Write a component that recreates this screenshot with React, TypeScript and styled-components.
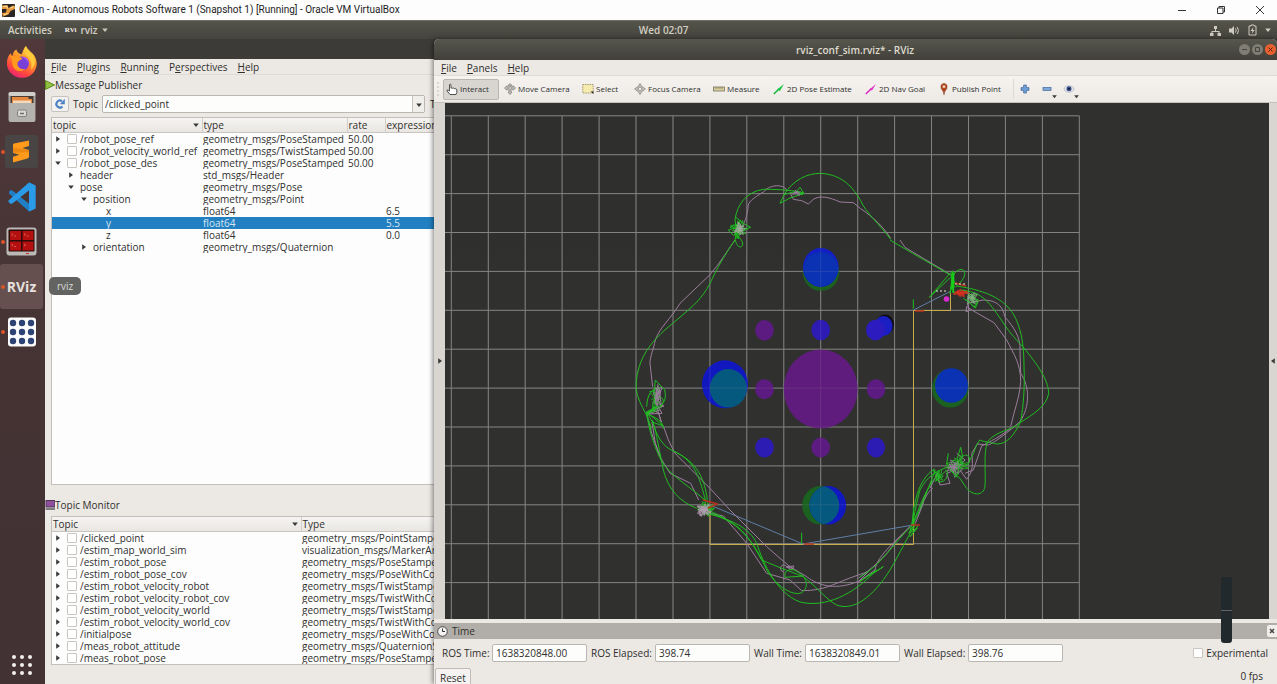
import React from 'react';
import styled, { createGlobalStyle } from 'styled-components';

const GlobalStyle = createGlobalStyle`
  * { box-sizing: border-box; }
  html, body { margin: 0; padding: 0; background: #3c3b37; }
  body, button, input { font-family: 'Open Sans', 'Noto Sans', sans-serif; font-size: 10px; line-height: 12px; color: #2f2f2d; }
  button { margin: 0; padding: 0; border: 0; background: none; }
  u { text-underline-offset: 1px; }
  svg { flex: none; }
`;

/* ---------- shell ---------- */

const Screen = styled.div`
  display: flex;
  flex-direction: column;
  height: 100vh;
  min-height: 600px;
  overflow: hidden;
`;

const HostBar = styled.header`
  display: flex;
  align-items: center;
  flex: 0 0 20px;
  padding-left: 2px;
  background: #fdfdfd;
  gap: 4px;
`;

const HostTitle = styled.h1`
  flex: 1;
  margin: 0;
  font: 400 10px/14px Roboto, sans-serif;
  color: #1c1c1c;
  white-space: nowrap;
`;

const HostButton = styled.button`
  display: flex;
  justify-content: center;
  width: 35px;
`;

const TopBar = styled.div`
  display: grid;
  grid-template-columns: 639fr auto 590fr;
  align-items: center;
  flex: 0 0 19px;
  padding: 0 6px 0 8px;
  background: linear-gradient(#55544a, #45443d);
  border-top: 1px solid #6f6e66;
  color: #d3cfc3;
  font-weight: 600;
`;

const TopGroup = styled.div<{ $end?: boolean }>`
  display: flex;
  align-items: center;
  justify-content: ${p => (p.$end ? 'flex-end' : 'flex-start')};
  gap: ${p => (p.$end ? 8 : 13)}px;
`;

const TopButton = styled.button`
  display: flex;
  align-items: center;
  gap: 4px;
  color: inherit;
  font-weight: 600;
`;

const Desktop = styled.div`
  display: grid;
  grid-template-columns: 45px minmax(0, 389fr) minmax(0, 843fr);
  flex: 1;
  min-height: 0;
`;

/* ---------- dock ---------- */

const Dock = styled.nav`
  display: flex;
  flex-direction: column;
  background: linear-gradient(#51383a, #463435 40%, #423233);
`;

const DockSlot = styled.div<{ $bottom?: boolean }>`
  position: relative;
  flex: 0 0 45px;
  margin-top: ${p => (p.$bottom ? 'auto' : '0')};
  margin-bottom: ${p => (p.$bottom ? '-3px' : '0')};
`;

const DockButton = styled.button<{ $active?: boolean }>`
  display: flex;
  align-items: center;
  justify-content: center;
  width: 43px;
  height: 45px;
  border-radius: 3px;
  background: ${p => (p.$active ? '#65504f' : 'transparent')};
`;

const RunningDot = styled.span`
  position: absolute;
  left: 1px;
  top: 21px;
  width: 4px;
  height: 4px;
  border-radius: 50%;
  background: #dc5427;
`;

const Tooltip = styled.div`
  position: absolute;
  z-index: 5;
  left: 49px;
  top: 13px;
  padding: 3px 8px;
  border-radius: 5px;
  background: #636462;
  color: #dad9d5;
`;

/* ---------- rqt window ---------- */

const RqtWindow = styled.section`
  display: flex;
  flex-direction: column;
  min-width: 0;
  margin-top: 20px;
  padding-bottom: 19px;
  background: #ece8e4;
  overflow: hidden;
`;

const MenuBar = styled.nav<{ $pad: number; $gap: number }>`
  display: flex;
  align-items: center;
  flex: 0 0 16px;
  gap: ${p => p.$gap}px;
  padding-left: ${p => p.$pad}px;
  background: #ece8e4;
  border-bottom: 1px solid #dedad6;
  button { font-weight: 500; }
`;

const DockTitle = styled.h2`
  display: flex;
  align-items: center;
  flex: 0 0 20px;
  margin: 0;
  padding-bottom: 1px;
  font-weight: 400;
  font-size: 10px;
`;

const TopicRow = styled.div`
  display: flex;
  align-items: center;
  flex: 0 0 18px;
  padding-left: 6px;
  white-space: nowrap;
`;

const RefreshButton = styled.button`
  display: flex;
  align-items: center;
  justify-content: center;
  width: 18px;
  height: 16px;
  margin-right: 4px;
  border: 1px solid #c6c2bd;
  border-radius: 2px;
  background: #f4f2f0;
`;

const Combo = styled.div`
  display: flex;
  flex: 1;
  height: 18px;
  margin: 0 5px 0 4px;
  border: 1px solid #bab6b1;
  border-radius: 2px;
  background: #fdfdfc;
  input { flex: 1; min-width: 0; padding: 0 2px; border: 0; background: none; outline: 0; }
  button { width: 12px; border-left: 1px solid #c6c2bd; background: #f1efec; }
`;

const Clipped = styled.span`
  width: 4px;
  overflow: hidden;
`;

const TableFrame = styled.div<{ $grow?: boolean }>`
  flex: ${p => (p.$grow ? '1 1 0' : '0 0 149px')};
  min-height: 0;
  margin: ${p => (p.$grow ? '4px 0 10px 6px' : '1px 0 0 6px')};
  border: 1px solid #c3bfba;
  border-right: 0;
  background: #fdfdfd;
  overflow: hidden;
`;

const Table = styled.table`
  width: 100%;
  table-layout: fixed;
  border-collapse: collapse;
  th, td { padding: 0 0 0 1px; text-align: left; font-weight: 400; white-space: nowrap; overflow: hidden; }
  th { height: 14px; background: linear-gradient(#f6f4f2, #e9e6e2); border-right: 1px solid #d2ceca; border-bottom: 1px solid #c9c5c0; }
  th:last-child { border-right: 0; }
  td { height: 12px; line-height: 12px; }
`;

const HeadCell = styled.span`
  display: flex;
  align-items: center;
  justify-content: space-between;
  padding-right: 3px;
`;

const Row = styled.tr<{ $selected?: boolean }>`
  background: ${p => (p.$selected ? '#2280c2' : 'transparent')};
  color: ${p => (p.$selected ? '#d6e6f2' : 'inherit')};
`;

const TreeCell = styled.span<{ $level: number }>`
  display: flex;
  align-items: center;
  height: 12px;
  padding-left: ${p => p.$level * 13}px;
`;

const Twisty = styled.button`
  display: flex;
  align-items: center;
  justify-content: center;
  width: 9px;
  height: 12px;
  margin-right: 5px;
`;

const Tick = styled.input`
  appearance: none;
  flex: 0 0 10px;
  width: 10px;
  height: 10px;
  margin: 0 3px 0 0;
  border: 1px solid #c9c6c2;
  border-radius: 1px;
  background: #fff;
`;

/* ---------- rviz window ---------- */

const RvizWindow = styled.section`
  position: relative;
  z-index: 2;
  display: flex;
  flex-direction: column;
  min-width: 0;
  border-radius: 5px 5px 0 0;
  background: #ece8e4;
  box-shadow: -1px 0 5px rgba(0, 0, 0, 0.5);
  overflow: clip;
  overflow-clip-margin: 6px;
`;

const TitleBar = styled.header`
  display: grid;
  grid-template-columns: 1fr auto 1fr;
  align-items: center;
  flex: 0 0 21px;
  padding-right: 1px;
  border-radius: 5px 5px 0 0;
  background: linear-gradient(#58574d, #403f3a);
  color: #dfdbd0;
  h2 { grid-column: 2; margin: 0; font-size: 10px; font-weight: 600; }
`;

const WindowButtons = styled.div`
  display: flex;
  justify-content: flex-end;
  gap: 2px;
`;

const RoundButton = styled.button<{ $close?: boolean }>`
  display: flex;
  align-items: center;
  justify-content: center;
  width: 11px;
  height: 11px;
  border-radius: 50%;
  background: ${p => (p.$close ? '#e9602f' : '#7f7d74')};
`;

const ToolBar = styled.div`
  display: flex;
  align-items: center;
  flex: 0 0 27px;
  gap: 2px;
  padding-left: 3px;
  background: linear-gradient(#f5f2ef, #edeae6);
  border-bottom: 1px solid #c5c1bc;
`;

const Grip = styled.span`
  width: 4px;
  height: 14px;
  border-left: 2px dotted #d8d4cf;
`;

const Tool = styled.button<{ $w: number; $on?: boolean }>`
  position: relative;
  display: flex;
  align-items: center;
  flex: 0 0 ${p => p.$w}px;
  gap: 2px;
  height: 21px;
  padding-left: 2px;
  border: 1px solid ${p => (p.$on ? '#b9b6b1' : 'transparent')};
  border-radius: 2px;
  background: ${p => (p.$on ? '#d8d5d1' : 'transparent')};
  font-size: 8px;
  font-weight: 500;
  white-space: nowrap;
`;

const MenuMark = styled.span`
  position: absolute;
  right: 0;
  bottom: 0;
  line-height: 0;
`;

const Separator = styled.span`
  width: 1px;
  height: 20px;
  margin-left: 4px;
  background: #dcd8d4;
`;

const ViewRow = styled.div`
  display: flex;
  flex: 1;
  min-height: 0;
`;

const SideStrip = styled.button<{ $w: number }>`
  display: flex;
  align-items: center;
  justify-content: center;
  flex: 0 0 ${p => p.$w}px;
  background: #d9d6d2;
`;

const Scene = styled.svg`
  display: block;
  flex: 1;
  min-width: 0;
  height: 100%;
  background: #30302f;
`;

const TimeHeader = styled.header`
  display: flex;
  align-items: center;
  flex: 0 0 16px;
  gap: 4px;
  margin-top: 4px;
  padding-left: 3px;
  background: #b1aea9;
  h3 { flex: 1; margin: 0; font-size: 10px; font-weight: 500; }
`;

const PanelClose = styled.button`
  display: flex;
  align-items: center;
  justify-content: center;
  width: 10px;
  height: 12px;
  border-radius: 2px 0 0 2px;
  background: #f0eeeb;
`;

const TimeFields = styled.form`
  display: flex;
  align-items: center;
  flex: 0 0 28px;
  gap: 4px;
  padding: 0 9px 0 8px;
`;

const Field = styled.label<{ $w: number }>`
  display: flex;
  align-items: center;
  white-space: nowrap;
  span { width: ${p => p.$w}px; }
  input { width: 95px; height: 18px; padding: 0 3px; border: 1px solid #bab6b1; border-radius: 2px; background: #fdfdfc; }
`;

const Experimental = styled.label`
  display: flex;
  align-items: center;
  margin-left: auto;
  white-space: nowrap;
`;

const StatusRow = styled.footer`
  display: flex;
  align-items: center;
  justify-content: space-between;
  flex: 0 0 17px;
  padding: 0 14px 0 1px;
  overflow: hidden;
`;

const ResetButton = styled.button`
  align-self: flex-start;
  height: 20px;
  margin-top: 1px;
  padding: 0 4px;
  border: 1px solid #c0bcb7;
  border-radius: 2px;
  background: #f5f3f1;
`;

const LevelBar = styled.div`
  position: absolute;
  right: 45px;
  bottom: 41px;
  display: flex;
  align-items: center;
  width: 11px;
  height: 66px;
  border-radius: 3px;
  background: #22292c;
  &::after { content: ''; flex: 1; height: 1px; background: #5f6566; }
`;

/* ---------- small icons ---------- */

const Arrow = ({ dir, color = '#3a3a38', size = 6 }: { dir: 'r' | 'd' | 'l'; color?: string; size?: number }) => (
  <svg width={size} height={size} viewBox="0 0 6 6" aria-hidden="true">
    <path fill={color} d={dir === 'r' ? 'M1.2 0.2L5 3L1.2 5.8Z' : dir === 'l' ? 'M4.8 0.2L1 3L4.8 5.8Z' : 'M0.2 1.4H5.8L3 5Z'} />
  </svg>
);

const VBoxIcon = () => (
  <svg width="13" height="13" viewBox="0 0 13 13" aria-hidden="true">
    <rect width="13" height="13" rx="1" fill="#2a2522" />
    <path d="M0 1.5L5.5 1L6.5 4L11 1.5L13 2V5L8.5 7L6.5 10.5L1 12.5L0 9L4 8.4L4.6 5L0 5Z" fill="#e59a3c" />
    <path d="M1 2.6L4.8 2.2L5.6 4.5M8 4.2L11.5 2.8M2 10.8L5.5 9.5" stroke="#ffe2a8" fill="none" />
  </svg>
);

const FirefoxIcon = () => (
  <svg width="32" height="34" viewBox="0 0 32 34" aria-hidden="true">
    <defs>
      <linearGradient id="fox" x1="0.8" y1="0" x2="0.3" y2="1">
        <stop offset="0" stopColor="#ffe14a" />
        <stop offset="0.4" stopColor="#ff9a2a" />
        <stop offset="0.75" stopColor="#ff4a3c" />
        <stop offset="1" stopColor="#e8207a" />
      </linearGradient>
    </defs>
    <path fill="url(#fox)" d="M20 1C21 5 26 7 28.500 11C31.500 16 31.500 22 28 27C24 32.500 17 34 11 32C4 29.500 0.500 23.500 1 17C1.200 12.500 3 9.500 5 8C5 9.500 5.500 10.500 6.500 11C7 8 8 5.500 10.500 4.500C10.500 6.500 12.500 8.500 15.500 9.500C17 6.500 17.500 3 20 1Z" />
    <circle cx="16" cy="18.500" r="7" fill="#7a3fd6" />
    <path fill="#ff9a1f" d="M3 10C6 12 10 10.500 13 12L16.500 13C15 15.500 12.500 15 11.500 18C11 22 15 25 19.500 24C15 28 8 26 6.500 20C6 17 7 14 3 10Z" />
    <path fill="#a25cf0" d="M16 12C20 11.500 23.500 15 22.500 19C22 15.500 18.500 14 16 12Z" />
    <path fill="#ffcb3d" d="M20 1C21 5 27 7.500 28.500 13C29.500 18 28 22 25 25C26.500 19 24.500 13 20.500 10.500C18 9 18 4 20 1Z" />
  </svg>
);

const FilesIcon = () => (
  <svg width="28" height="32" viewBox="0 0 28 32" aria-hidden="true">
    <rect x="0.500" y="1" width="27" height="30" rx="2.500" fill="#a9a8a5" />
    <rect x="0.500" y="1" width="27" height="4" rx="2" fill="#cfcecb" />
    <rect x="2.500" y="5" width="23" height="8" fill="#4a3a32" />
    <path d="M4 6H20L21 8H24V13H4Z" fill="#e5873f" />
    <path d="M5 9.500H23V13H5Z" fill="#f4d8b8" />
    <path d="M1 12H27V29Q27 31 25 31H3Q1 31 1 29Z" fill="#b3b2af" />
    <rect x="9.500" y="19" width="9" height="6.500" rx="1.500" fill="#d9d8d6" stroke="#82817e" />
    <path d="M12 22.500H16" stroke="#72716e" strokeWidth="1.500" />
  </svg>
);

const SublimeIcon = () => (
  <svg width="33" height="33" viewBox="0 0 33 33" aria-hidden="true">
    <rect width="33" height="33" rx="2.500" fill="#484544" />
    <path fill="#ff9a1c" d="M8 9.800Q8 9 9 8.600L24 5.600V11L17.500 13L24 15V21.500Q24 23 22.500 23.500L8 27.500V21.800L14.500 19.800L8 18Z" />
    <path fill="#d97708" d="M8 12.600L24 15V17L8 18Z" opacity="0.500" />
  </svg>
);

const CodeIcon = () => (
  <svg width="30" height="30" viewBox="0 0 30 30" aria-hidden="true">
    <path fill="#1f7ec4" d="M22 0.500L28.500 3.500V26.500L22 29.500L2 11.500V9.500L3.500 8.200H5L22 21.500Z" />
    <path fill="#2a9be8" d="M22 0.500L28.500 3.500V26.500L22 29.500V8.500L5 21.800H3.500L1.500 20V18.500Z" />
    <path fill="#463435" d="M22 8.800V21.200L13.800 15Z" />
  </svg>
);

const TerminatorIcon = () => (
  <svg width="31" height="29" viewBox="0 0 31 29" aria-hidden="true">
    <rect x="0.500" y="0.500" width="30" height="28" rx="3" fill="#bbb9b6" />
    <rect x="2.500" y="2.500" width="26" height="22" rx="1" fill="#2b0a0a" />
    <g fill="#b3100f">
      <rect x="4" y="4" width="11" height="9" /><rect x="16.500" y="4" width="11" height="9" />
      <rect x="4" y="14.500" width="11" height="9" /><rect x="16.500" y="14.500" width="11" height="9" />
    </g>
    <path d="M5.500 6.500L7 7.500L5.500 8.500M18 6.500L19.500 7.500L18 8.500M5.500 17L7 18L5.500 19M18 17L19.500 18L18 19M8 9H10M20.500 9H22.500M8 19.500H10" stroke="#e5766e" fill="none" strokeWidth="0.700" />
    <path d="M20 26.500H23" stroke="#c0302a" />
  </svg>
);

const RvizMark = styled.span`
  color: #e6e1de;
  font: 700 14px/20px 'Open Sans', sans-serif;
`;

const MiniMark = styled.span`
  font: 700 7px/8px 'Liberation Serif', serif;
  color: #f0ecea;
`;

const NineDots = () => (
  <svg width="30" height="30" viewBox="0 0 30 30" aria-hidden="true">
    <rect x="1" y="0.500" width="28" height="29" rx="3" fill="#fcfcfd" />
    {[6, 15, 24].map(y => [6, 15, 24].map(x => <circle key={`${x}-${y}`} cx={x} cy={y} r="3.200" fill="#2c4374" />))}
  </svg>
);

const AppsIcon = () => (
  <svg width="22" height="22" viewBox="0 0 22 22" aria-hidden="true">
    {[3, 11, 19].map(y => [3, 11, 19].map(x => <circle key={`${x}-${y}`} cx={x} cy={y} r="2" fill="#f3f0ee" />))}
  </svg>
);

const toolIcons: Record<string, React.ReactNode> = {
  hand: <path d="M3.500 6.500V1.600Q4.300 0.600 5 1.600V5.200Q6 4.500 6.600 5.300Q7.600 4.700 8.200 5.600Q9.200 5.100 9.800 6Q10.800 6 10.800 7V9.500L10 11.500H4L1 7.800Q0.800 6.700 2 6.800L3.500 8Z" fill="#fff" stroke="#3c3c3a" strokeWidth="0.900" />,
  move: <g fill="#c3c1bd" stroke="#777571" strokeWidth="0.700"><path d="M6 0.500L8 2.500H6.800V4H9V2.800L11.500 5L9 7.200V6H7V9H8L6 11.500L4 9H5V6H3V7.200L0.500 5L3 2.800V4H5.200V2.500H4Z" /></g>,
  select: <g><rect x="0.800" y="1.500" width="10.400" height="8.500" fill="#f7ecb0" stroke="#8f875a" strokeWidth="0.800" strokeDasharray="1.500 0.800" /><path d="M8.500 8.500L11.500 11L11.500 8.500Z" fill="#222" /></g>,
  focus: <g fill="#bfbdb9" stroke="#85837f" strokeWidth="0.700"><path d="M6 0.500L8 3.500L11.500 6L8 8.500L6 11.500L4 8.500L0.500 6L4 3.500Z" /><circle cx="6" cy="6" r="1.800" fill="#efedea" /></g>,
  ruler: <g><rect x="0.500" y="4" width="11" height="4" fill="#d9cf9e" stroke="#77735d" strokeWidth="0.800" /><path d="M3 4V6M5 4V6M7 4V6M9 4V6" stroke="#77735d" strokeWidth="0.600" /></g>,
  pose: <g><path d="M0.800 11L6.500 5.500" stroke="#19b83c" strokeWidth="1.600" /><path d="M4 6.500L11 1L7 8Z" fill="#1fc846" /></g>,
  nav: <g><path d="M0.800 11L6.500 5.500" stroke="#d92cc0" strokeWidth="1.600" /><path d="M4.500 6.500L11 1L7 7.500Z" fill="#e233c8" /></g>,
  pin: <g><path d="M6 11.800Q5.800 8.500 3.200 5.500Q2 1 6 0.400Q10 1 8.800 5.500Q6.200 8.500 6 11.800Z" fill="#b5481f" stroke="#7c2c10" strokeWidth="0.500" /><circle cx="6" cy="3.700" r="1.400" fill="#f2cdbc" /></g>,
  plus: <path d="M4.600 2H7.400V4.600H10V7.400H7.400V10H4.600V7.400H2V4.600H4.600Z" fill="#6f9fd4" stroke="#41699c" strokeWidth="0.700" />,
  minus: <rect x="2" y="4.500" width="8" height="3" fill="#7fa8d8" stroke="#41699c" strokeWidth="0.700" />,
  eye: <g><ellipse cx="6" cy="6" rx="5" ry="3.200" fill="#dfe4ec" stroke="#a9adb5" strokeWidth="0.600" /><circle cx="6" cy="5.800" r="2.500" fill="#3c4f88" /><circle cx="6" cy="5.800" r="1" fill="#10162c" /></g>,
};

const ToolIcon = ({ name }: { name: string }) => (
  <svg width="12" height="12" viewBox="0 0 12 12" aria-hidden="true">{toolIcons[name]}</svg>
);

/* ---------- data ---------- */

type TopicRowData = { name: string; type: string; rate?: string; expr?: string; level?: number; open?: boolean; leaf?: boolean; tick?: boolean; selected?: boolean };

const publisherRows: TopicRowData[] = [
  { name: '/robot_pose_ref', type: 'geometry_msgs/PoseStamped', rate: '50.00', tick: true },
  { name: '/robot_velocity_world_ref', type: 'geometry_msgs/TwistStamped', rate: '50.00', tick: true },
  { name: '/robot_pose_des', type: 'geometry_msgs/PoseStamped', rate: '50.00', tick: true, open: true },
  { name: 'header', type: 'std_msgs/Header', level: 1 },
  { name: 'pose', type: 'geometry_msgs/Pose', level: 1, open: true },
  { name: 'position', type: 'geometry_msgs/Point', level: 2, open: true },
  { name: 'x', type: 'float64', expr: '6.5', level: 3, leaf: true },
  { name: 'y', type: 'float64', expr: '5.5', level: 3, leaf: true, selected: true },
  { name: 'z', type: 'float64', expr: '0.0', level: 3, leaf: true },
  { name: 'orientation', type: 'geometry_msgs/Quaternion', level: 2 },
];

const monitorRows: [string, string][] = [
  ['/clicked_point', 'geometry_msgs/PointStamped'],
  ['/estim_map_world_sim', 'visualization_msgs/MarkerArray'],
  ['/estim_robot_pose', 'geometry_msgs/PoseStamped'],
  ['/estim_robot_pose_cov', 'geometry_msgs/PoseWithCovariance'],
  ['/estim_robot_velocity_robot', 'geometry_msgs/TwistStamped'],
  ['/estim_robot_velocity_robot_cov', 'geometry_msgs/TwistWithCovariance'],
  ['/estim_robot_velocity_world', 'geometry_msgs/TwistStamped'],
  ['/estim_robot_velocity_world_cov', 'geometry_msgs/TwistWithCovariance'],
  ['/initialpose', 'geometry_msgs/PoseWithCovariance'],
  ['/meas_robot_attitude', 'geometry_msgs/QuaternionStamped'],
  ['/meas_robot_pose', 'geometry_msgs/PoseStamped'],
];

const tools: { icon: string; label: string; w: number; on?: boolean }[] = [
  { icon: 'hand', label: 'Interact', w: 56, on: true },
  { icon: 'move', label: 'Move Camera', w: 76 },
  { icon: 'select', label: 'Select', w: 50 },
  { icon: 'focus', label: 'Focus Camera', w: 77 },
  { icon: 'ruler', label: 'Measure', w: 58 },
  { icon: 'pose', label: '2D Pose Estimate', w: 90 },
  { icon: 'nav', label: '2D Nav Goal', w: 71 },
  { icon: 'pin', label: 'Publish Point', w: 72 },
];

const TreeName = ({ row }: { row: TopicRowData }) => (
  <TreeCell $level={row.level ?? 0}>
    {row.leaf ? <Twisty as="span" /> : (
      <Twisty aria-label={`${row.open ? 'Collapse' : 'Expand'} ${row.name}`}><Arrow dir={row.open ? 'd' : 'r'} /></Twisty>
    )}
    {row.tick && <Tick type="checkbox" aria-label={row.name} />}
    {row.name}
  </TreeCell>
);

/* ---------- 3D view ---------- */

const gridX = Array.from({ length: 18 }, (_, i) => 1079.3 - i * 36.94);
const gridY = Array.from({ length: 14 }, (_, i) => 115.8 + i * 38.9);

/** A tangled closed-loop track around one waypoint. */
function tangle(cx: number, cy: number, rx: number, ry: number, points: number, seed: number) {
  let d = '';
  for (let i = 0; i < points; i++) {
    const a = i * 2.3 + seed;
    const r = 0.45 + 0.55 * Math.abs(Math.sin(i * 1.7 + seed * 3));
    const x = (cx + rx * r * Math.cos(a)).toFixed(1);
    const y = (cy + ry * r * Math.sin(a)).toFixed(1);
    const b = a + 1.1;
    d += i === 0 ? `M${x} ${y}` : `Q${(cx + rx * 0.7 * Math.cos(b)).toFixed(1)} ${(cy + ry * 0.7 * Math.sin(b)).toFixed(1)} ${x} ${y}`;
  }
  return d;
}

const GREEN = '#20bd20';
const MAUVE = '#9b7d9b';

const trackNW = 'translate(620 160) scale(0.33333)';
const trackE = 'translate(850 240) scale(0.33333)';
const trackSW = 'translate(620 400) scale(0.33333)';

const greenTracks: [string, string[]][] = [
  [trackNW, [
    'M492 104C520 60 560 40 602 40C670 44 700 85 722 122C735 155 780 195 812 238',
    'M550 98C500 88 460 88 430 88C380 96 352 130 345 180L350 210L345 240C320 275 300 310 282 345C262 390 245 415 205 450C160 490 130 510 100 545C70 580 48 625 48 685C52 715 64 735 78 762',
    'M492 104L480 130L510 114L540 104L552 100L540 82L532 92L548 104L520 96Z',
    'M345 170L370 190L392 202L366 212L340 226L325 210L350 202L362 180M346 240C350 262 366 268 368 252C368 240 356 232 350 222',
    'M102 700L106 660L134 690C142 720 128 740 100 745L80 762L110 735M80 740C82 700 96 685 120 684M78 762C90 790 94 800 92 810M84 764C120 776 130 790 130 806M80 756L104 750L78 764L112 742',
  ]],
  [trackE, [
    'M120 0L188 40L306 108L238 172L300 100L308 94',
    'M308 92L302 150L312 98L300 160L308 120L312 160L304 100M308 110C318 86 342 82 344 98C346 116 330 126 318 142',
    'M320 138C400 150 450 172 480 208C505 240 522 290 522 380C525 440 520 500 512 545C490 590 470 612 440 612C420 606 400 606 390 600',
    'M330 150C400 155 420 190 462 252C480 280 500 300 520 322C560 370 596 420 596 460C590 500 545 525 512 547C480 575 440 570 412 606',
    'M412 606C400 640 408 700 405 740C400 768 370 768 350 745L330 715L300 690',
    'M390 600C375 615 375 640 358 662',
    'M340 150L370 170L384 186L376 204L362 190L340 175M360 170L386 180L372 202L352 180',
    'M300 680C260 690 230 710 210 750C198 790 196 820 186 850L180 875M190 178V206M256 690C232 750 216 800 190 850',
    'M295 640L290 672L318 712L326 690L322 655L332 622L338 650L310 690L285 680M330 660C340 635 366 645 358 668C345 680 332 675 330 660M262 720L250 690L270 712L256 724L290 690C300 720 270 734 262 720',
  ]],
  [trackSW, [
    'M80 42C100 60 106 90 112 120C118 150 124 180 130 210C145 270 180 305 230 325',
    'M80 42C90 100 100 130 118 170C140 220 190 245 255 300',
    'M98 60C108 110 130 140 158 152C200 172 250 200 262 300M158 152C220 180 236 220 256 300',
    'M76 40L110 20L80 36L130 78L96 66M104 -5C140 -20 138 20 100 36',
    'M256 340C330 355 390 385 410 430C430 490 470 580 540 606C620 625 700 580 760 520L790 500L720 544L770 510M720 530C780 500 820 430 876 376',
    'M262 336C350 370 370 380 425 480C470 500 500 510 550 530C590 560 620 600 650 615C700 635 760 590 810 510C840 460 862 410 888 372',
    'M262 330C360 370 400 420 440 510C470 560 520 590 545 578C570 560 560 530 530 514C510 500 490 515 495 532L550 528',
    'M880 320L882 376L866 400L892 384L870 410L895 376M876 376C880 320 890 240 945 206M876 376C900 320 915 270 948 230M545 398V432',
  ]],
];

const mauveTracks: [string, string[]][] = [
  [trackNW, [
    'M500 90C490 72 450 72 430 96C400 115 382 125 384 145C380 170 376 190 358 206',
    'M510 98L520 118L545 122L565 132L580 118C600 105 630 112 660 126L700 128L722 146C760 172 790 200 812 235',
    'M345 240C320 275 300 310 270 344L180 430C150 480 120 500 106 540C100 570 90 590 90 610L98 680M106 690L126 680L112 730L132 738L100 750L116 760L124 786L110 740L120 690L100 730M118 684L124 740L106 700',
  ]],
  [trackE, [
    'M150 0L165 22L220 55L302 104',
    'M350 200L372 214L432 248L470 300C490 340 512 370 512 425C510 460 500 490 492 520L482 560M350 200L348 215L358 212L352 190L400 180C440 180 460 200 464 230C490 260 512 290 510 330L512 400C540 440 540 500 510 545C470 580 430 610 415 615L382 612L365 640C372 690 362 700 350 718L330 690',
    'M482 565C450 590 420 605 395 618L370 690L345 700M248 745C230 755 215 800 205 820M230 755L212 800L220 790L196 850M320 640L345 660L316 690L290 700L300 730L270 735L262 700L240 745M300 680L340 685L312 712',
  ]],
  [trackSW, [
    'M80 40L95 100L120 170L150 220L212 250L236 300M130 78L145 120L165 160L215 210L270 265L330 330L440 440L480 475L510 500L560 530C600 560 650 570 712 545',
    'M96 66L106 130L120 170M270 340L310 348L380 430L440 520L510 540L545 572C620 572 640 550 715 525L745 515L712 548L765 510C770 470 820 430 870 380L830 420C790 480 760 500 715 535',
    'M490 515A10 10 0 1 1 500 500L522 498L515 510L498 500L520 506M110 10L126 40L82 42L120 30M250 316L232 340L255 346L240 325L262 320',
  ]],
];

const obstacles: [number, number, number, number, string][] = [
  [821, 272, 18.3, 19, '#1b6120'], [820.800, 267.500, 17.800, 19.500, '#1420c4'], [820.800, 269, 17.300, 17, '#0b32b2'],
  [725, 384.300, 23, 24, '#1218bf'], [728.300, 388.300, 18.500, 19.300, '#05587e'],
  [950.300, 388.300, 18.300, 19.300, '#1b6120'], [951.500, 385.500, 16.500, 17.300, '#0b32b2'],
  [820.700, 505.300, 18.500, 19.300, '#1b6120'], [827.800, 505.300, 18.300, 19.300, '#1218bf'],
  [820.700, 389, 37, 39.500, '#5f1c7d'],
  [764.500, 330.200, 9.300, 10.300, '#5c1b80'], [820.700, 330, 9.300, 10.300, '#2d1cb4'],
  [764.500, 389.300, 9.300, 10, '#5c1b80'], [876, 389.300, 9.300, 10, '#5c1b80'],
  [764.500, 447.500, 9.300, 10, '#2d1cb4'], [820.700, 447.500, 9.300, 10, '#5c1b80'], [876, 447.500, 9, 10, '#2d1cb4'],
  [885, 324.500, 9, 10, '#0d0d1a'], [883.500, 326, 9, 10, '#1a1fc4'], [875.500, 330, 9.500, 10.300, '#2c1cc0'],
];

const RobotView = () => (
  <Scene viewBox="445 103 824 516" preserveAspectRatio="xMidYMid slice" role="img" aria-label="Robot map view">
    <defs>
      <clipPath id="south"><ellipse cx="820.700" cy="505.300" rx="18.500" ry="19.300" /></clipPath>
    </defs>
    <g stroke="#7b7b7a" strokeWidth="1">
      {gridX.map(x => <path key={x} d={`M${x.toFixed(1)} 115.8V621.500`} />)}
      {gridY.map(y => <path key={y} d={`M414.200 ${y.toFixed(1)}H1079.300`} />)}
    </g>
    {obstacles.map(([cx, cy, rx, ry, fill]) => <ellipse key={`${cx}-${cy}-${rx}`} cx={cx} cy={cy} rx={rx} ry={ry} fill={fill} />)}
    <ellipse cx="827.800" cy="505.300" rx="18.300" ry="19.300" fill="#05587e" clipPath="url(#south)" />
    <g stroke="#b4b4b4" strokeWidth="1" opacity="0.140">
      {gridX.map(x => <path key={x} d={`M${x.toFixed(1)} 115.8V621.500`} />)}
      {gridY.map(y => <path key={y} d={`M414.200 ${y.toFixed(1)}H1079.300`} />)}
    </g>
    <path d="M710 505V544.500H913.500V310.500H950.500V291" fill="none" stroke="#c9ab4c" />
    <path d="M710 505L803 544L913 525M913.500 310L951 291" fill="none" stroke="#5f7fa6" />
    <g fill="none" strokeWidth="3" stroke={MAUVE} strokeLinejoin="round">
      {mauveTracks.map(([t, ds]) => <g key={t} transform={t}>{ds.map(d => <path key={d} d={d} />)}</g>)}
    </g>
    <g fill="none" strokeWidth="3" stroke={GREEN} strokeLinejoin="round">
      {greenTracks.map(([t, ds]) => <g key={t} transform={t}>{ds.map(d => <path key={d} d={d} />)}</g>)}
    </g>
    <g fill="none" strokeWidth="0.800">
      <path d={tangle(739, 229, 9, 10, 16, 1)} stroke={GREEN} />
      <path d={tangle(740, 229, 6, 7, 16, 2)} stroke="#a6a6a0" />
      <path d={tangle(706, 508, 9, 9, 14, 4)} stroke={GREEN} />
      <path d={tangle(704, 510, 8, 7, 20, 3)} stroke="#b59bb3" />
      <path d={tangle(972, 298, 7, 7, 14, 5)} stroke="#7fb47c" />
      <path d={tangle(958, 465, 12, 10, 12, 6)} stroke={GREEN} />
      <path d={tangle(954, 467, 8, 8, 12, 7)} stroke={MAUVE} />
      <path d={tangle(939, 476, 5, 7, 8, 8)} stroke={GREEN} />
      <path d={tangle(953, 282, 2, 11, 12, 1)} stroke="#16d016" />
      <path d={tangle(655, 398, 6, 14, 8, 3)} stroke={GREEN} />
      <path d={tangle(657, 395, 4, 11, 10, 6)} stroke={MAUVE} />
      <path d={tangle(961, 293, 8, 4, 18, 9)} stroke="#d8321f" />
      <path d={tangle(797, 193, 5, 3, 8, 2)} stroke={MAUVE} />
    </g>
    <path d="M703 500L717 504L708 508M915 311H924M804 544H814M911 525H920M955 283L966 286" fill="none" stroke="#b5301c" strokeWidth="1.500" />
    <path d="M936 291H948M955 284H965" fill="none" stroke="#e8e8e0" strokeWidth="1" strokeDasharray="2 2" />
    <circle cx="946.500" cy="299" r="2.800" fill="#d62ccf" />
  </Scene>
);

/* ---------- page ---------- */

const dockItems: { label: string; icon: React.ReactNode; running?: boolean; active?: boolean }[] = [
  { label: 'Firefox', icon: <FirefoxIcon /> },
  { label: 'Files', icon: <FilesIcon /> },
  { label: 'Sublime Text', icon: <SublimeIcon />, running: true },
  { label: 'Visual Studio Code', icon: <CodeIcon /> },
  { label: 'Terminator', icon: <TerminatorIcon />, running: true },
  { label: 'rviz', icon: <RvizMark>RViz</RvizMark>, running: true, active: true },
  { label: 'rqt', icon: <NineDots />, running: true },
];

export default function App() {
  return (
    <Screen>
      <GlobalStyle />
      <HostBar>
        <VBoxIcon />
        <HostTitle>Clean - Autonomous Robots Software 1 (Snapshot 1) [Running] - Oracle VM VirtualBox</HostTitle>
        <HostButton aria-label="Minimize"><svg width="10" height="10"><path d="M1 5.500H9" stroke="#333" /></svg></HostButton>
        <HostButton aria-label="Restore"><svg width="10" height="10"><path d="M1.500 3H7V8.500H1.500ZM3 3V1.500H8.500V7H7" stroke="#333" fill="none" /></svg></HostButton>
        <HostButton aria-label="Close"><svg width="10" height="10"><path d="M1 1L9 9M9 1L1 9" stroke="#333" fill="none" /></svg></HostButton>
      </HostBar>
      <TopBar>
        <TopGroup>
          <TopButton>Activities</TopButton>
          <TopButton><MiniMark aria-hidden="true">RVi</MiniMark>rviz <Arrow dir="d" color="#c9c5ba" /></TopButton>
        </TopGroup>
        <TopButton>Wed 02:07</TopButton>
        <TopGroup $end>
          <svg width="11" height="11" viewBox="0 0 11 11" aria-hidden="true"><path d="M4 1H7V4H6V6H9.500V8H11V11H7.500V8H8.500V7H2.500V8H3.500V11H0V8H1.500V6H5V4H4Z" fill="#cfcbc0" /></svg>
          <svg width="11" height="11" viewBox="0 0 11 11" aria-hidden="true"><path d="M0 3.500H2.500L5 1V10L2.500 7.500H0Z" fill="#cfcbc0" /><path d="M6.500 3.500Q7.800 5.500 6.500 7.500M8.200 2Q10.800 5.500 8.200 9" stroke="#cfcbc0" fill="none" /></svg>
          <svg width="9" height="12" viewBox="0 0 9 12" aria-hidden="true"><path d="M1 2H3V1H6V2H8V11H1Z" stroke="#cfcbc0" fill="none" /><path d="M5.500 3L2.500 7H4.500L3.800 9.800L6.800 6H4.800Z" fill="#cfcbc0" /></svg>
          <Arrow dir="d" color="#cfcbc0" />
        </TopGroup>
      </TopBar>
      <Desktop>
        <Dock aria-label="Dock">
          {dockItems.map(item => (
            <DockSlot key={item.label}>
              <DockButton aria-label={item.label} $active={item.active}>{item.icon}</DockButton>
              {item.running && <RunningDot />}
              {item.active && <Tooltip role="tooltip">rviz</Tooltip>}
            </DockSlot>
          ))}
          <DockSlot $bottom><DockButton aria-label="Show Applications"><AppsIcon /></DockButton></DockSlot>
        </Dock>

        <RqtWindow aria-label="rqt">
          <MenuBar $pad={6} $gap={10}>
            <button><u>F</u>ile</button>
            <button><u>P</u>lugins</button>
            <button><u>R</u>unning</button>
            <button>P<u>e</u>rspectives</button>
            <button><u>H</u>elp</button>
          </MenuBar>
          <DockTitle>
            <svg width="10" height="10" viewBox="0 0 10 10" aria-hidden="true"><path d="M0.500 0.500L9.500 5L0.500 9.500Z" fill="#8fbf3f" stroke="#5f8a22" /></svg>
            Message Publisher
          </DockTitle>
          <TopicRow>
            <RefreshButton aria-label="Refresh">
              <svg width="12" height="12" viewBox="0 0 12 12" aria-hidden="true"><path d="M8.500 8.500A3.500 3.500 0 1 1 8 3.200" stroke="#4d83c4" strokeWidth="2.200" fill="none" /><path d="M10.800 0.800V6.200H5.800Z" fill="#4d83c4" /></svg>
            </RefreshButton>
            <label htmlFor="topic">Topic</label>
            <Combo>
              <input id="topic" defaultValue="/clicked_point" />
              <button aria-label="Show topics"><Arrow dir="d" /></button>
            </Combo>
            <Clipped>Type</Clipped>
          </TopicRow>
          <TableFrame $grow>
            <Table>
              <colgroup><col style={{ width: 150 }} /><col style={{ width: 145 }} /><col style={{ width: 38 }} /><col /></colgroup>
              <thead>
                <tr>
                  <th><HeadCell>topic <Arrow dir="d" /></HeadCell></th>
                  <th>type</th><th>rate</th><th>expression</th>
                </tr>
              </thead>
              <tbody>
                {publisherRows.map(row => (
                  <Row key={row.name} $selected={row.selected}>
                    <td><TreeName row={row} /></td>
                    <td>{row.type}</td><td>{row.rate}</td><td>{row.expr}</td>
                  </Row>
                ))}
              </tbody>
            </Table>
          </TableFrame>
          <DockTitle>
            <svg width="10" height="10" viewBox="0 0 10 10" aria-hidden="true"><rect x="1" y="0.500" width="9" height="6.500" fill="#8e4f9e" stroke="#4c3352" /><path d="M0.500 9H10" stroke="#5c5a5e" strokeWidth="1.500" /></svg>
            Topic Monitor
          </DockTitle>
          <TableFrame>
            <Table>
              <colgroup><col style={{ width: 249 }} /><col /></colgroup>
              <thead>
                <tr><th><HeadCell>Topic <Arrow dir="d" /></HeadCell></th><th>Type</th></tr>
              </thead>
              <tbody>
                {monitorRows.map(([name, type]) => (
                  <Row key={name}>
                    <td><TreeName row={{ name, type, tick: true }} /></td>
                    <td>{type}</td>
                  </Row>
                ))}
              </tbody>
            </Table>
          </TableFrame>
        </RqtWindow>

        <RvizWindow aria-label="RViz">
          <TitleBar>
            <h2>rviz_conf_sim.rviz* - RViz</h2>
            <WindowButtons>
              <RoundButton aria-label="Minimize"><svg width="7" height="7"><path d="M1 3.500H6" stroke="#45443d" /></svg></RoundButton>
              <RoundButton aria-label="Maximize"><svg width="7" height="7"><path d="M1.500 1.500H5.500V5.500H1.500Z" stroke="#45443d" fill="none" /></svg></RoundButton>
              <RoundButton aria-label="Close" $close><svg width="7" height="7"><path d="M1.500 1.500L5.500 5.500M5.500 1.500L1.500 5.500" stroke="#5a2412" /></svg></RoundButton>
            </WindowButtons>
          </TitleBar>
          <MenuBar $pad={7} $gap={10}>
            <button><u>F</u>ile</button>
            <button><u>P</u>anels</button>
            <button><u>H</u>elp</button>
          </MenuBar>
          <ToolBar>
            <Grip />
            {tools.map(t => (
              <Tool key={t.label} $w={t.w} $on={t.on}><ToolIcon name={t.icon} />{t.label}</Tool>
            ))}
            <Separator />
            <Tool $w={20} aria-label="Add tool"><ToolIcon name="plus" /></Tool>
            <Tool $w={20} aria-label="Remove tool"><ToolIcon name="minus" /><MenuMark><Arrow dir="d" size={5} /></MenuMark></Tool>
            <Tool $w={20} aria-label="Visibility"><ToolIcon name="eye" /><MenuMark><Arrow dir="d" size={5} /></MenuMark></Tool>
          </ToolBar>
          <ViewRow>
            <SideStrip $w={11} aria-label="Show left panel"><Arrow dir="r" /></SideStrip>
            <RobotView />
            <SideStrip $w={8} aria-label="Show right panel"><Arrow dir="l" /></SideStrip>
          </ViewRow>
          <TimeHeader>
            <svg width="11" height="11" viewBox="0 0 11 11" aria-hidden="true"><circle cx="5.500" cy="5.500" r="4.800" fill="#f4f3f1" stroke="#4a4947" /><path d="M5.500 2.500V5.500H8" stroke="#333" fill="none" /></svg>
            <h3>Time</h3>
            <PanelClose aria-label="Close panel"><svg width="6" height="6"><path d="M1 1L5 5M5 1L1 5" stroke="#444" strokeWidth="1.500" /></svg></PanelClose>
          </TimeHeader>
          <TimeFields>
            <Field $w={50}><span>ROS Time:</span><input readOnly value="1638320848.00" /></Field>
            <Field $w={64}><span>ROS Elapsed:</span><input readOnly value="398.74" /></Field>
            <Field $w={51}><span>Wall Time:</span><input readOnly value="1638320849.01" /></Field>
            <Field $w={64}><span>Wall Elapsed:</span><input readOnly value="398.76" /></Field>
            <Experimental><Tick type="checkbox" />Experimental</Experimental>
          </TimeFields>
          <StatusRow>
            <ResetButton>Reset</ResetButton>
            <span>0 fps</span>
          </StatusRow>
          <LevelBar />
        </RvizWindow>
      </Desktop>
    </Screen>
  );
}
